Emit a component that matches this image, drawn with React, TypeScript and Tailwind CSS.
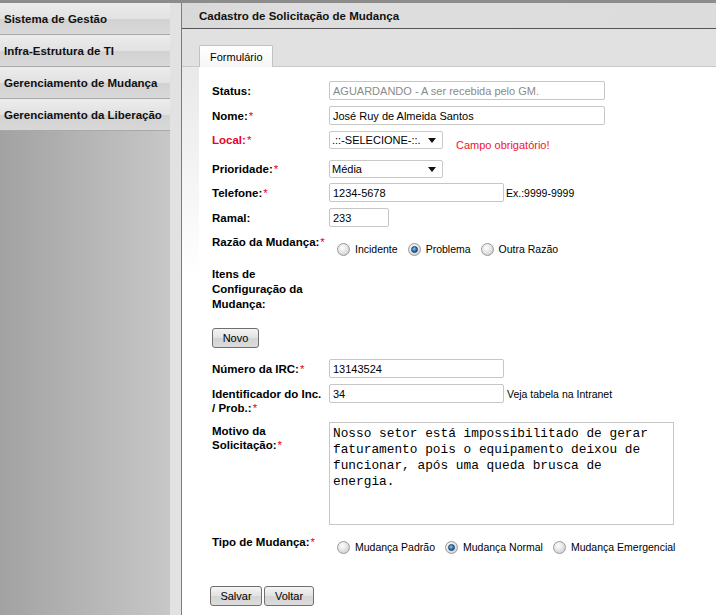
import React from 'react'

const menu = [
  'Sistema de Gestão',
  'Infra-Estrutura de TI',
  'Gerenciamento de Mudança',
  'Gerenciamento da Liberação',
]

const Req = () => <span className="text-[#e8002a] font-normal ml-[1px]">*</span>

const Radio = ({ checked }: { checked?: boolean }) => (
  <span className="relative inline-flex w-[13px] h-[13px] rounded-full border border-[#9a9a9a] bg-[radial-gradient(circle_at_40%_35%,#ffffff_0%,#e6e6e6_45%,#c4c4c4_100%)] items-center justify-center shrink-0">
    {checked && (
      <span className="w-[7px] h-[7px] rounded-full border border-[#1a3d63] bg-[radial-gradient(circle_at_40%_35%,#8cc8f0_0%,#2a73b8_55%,#123e70_100%)]" />
    )}
  </span>
)

const RadioOpt = ({ label, checked }: { label: string; checked?: boolean }) => (
  <span className="inline-flex items-center h-[14px]">
    <Radio checked={checked} />
    <span className="ml-[5px] text-[10.5px]">{label}</span>
  </span>
)

const Select = ({ value }: { value: string }) => (
  <div className="flex items-center justify-between w-[114px] h-[18px] border border-[#c9c9c9] rounded-[2px] bg-white pl-[2px] pr-[6px] text-[11px]">
    <span>{value}</span>
    <svg width="8" height="5" viewBox="0 0 8 5">
      <path d="M0 0 L8 0 L4 5 Z" fill="#111" />
    </svg>
  </div>
)

const Input = ({ value, w, muted }: { value: string; w: string; muted?: boolean }) => (
  <div
    className={`${w} h-[19px] border border-[#c6c6c6] rounded-[2px] bg-white px-[3px] flex items-center text-[11px] ${
      muted ? 'text-[#8a8a8a]' : 'text-black'
    }`}
  >
    {value}
  </div>
)

const Button = ({ label, w }: { label: string; w: string }) => (
  <button
    className={`${w} h-[20px] border border-[#707070] rounded-[3px] bg-[linear-gradient(#f4f4f4,#e2e2e2_50%,#d4d4d4_51%,#dcdcdc)] text-[11px] text-black leading-none`}
  >
    {label}
  </button>
)

export default function App() {
  return (
    <div
      className="w-[716px] h-[615px] overflow-hidden flex flex-col bg-white text-[11.5px] leading-[14px] text-black"
      style={{ fontFamily: '"Liberation Sans", Arial, sans-serif' }}
    >
      <div className="h-[3px] bg-[#8c8c8c] shrink-0" />
      <div className="flex flex-1">
        {/* sidebar */}
        <div className="w-[170px] flex flex-col bg-[linear-gradient(to_right,#a2a2a2,#c7c7c7)]">
          {menu.map((m) => (
            <div
              key={m}
              className="h-[32px] border-b border-[#a9a9a9] bg-[linear-gradient(#ececec,#e2e2e2_50%,#d2d2d2_52%,#d8d8d8)] flex items-center pl-[4px] font-bold text-[11.5px] text-[#111]"
            >
              {m}
            </div>
          ))}
        </div>
        <div className="w-[12px] bg-[#e2e2e2] border-r border-[#7c7c7c]" />
        {/* main */}
        <div className="flex-1 flex flex-col bg-[linear-gradient(#e2e2e2_0px,#ffffff_275px)]">
          <div className="h-[26px] border-b border-[#555] bg-[linear-gradient(100deg,#d8d8d8_0%,#dedede_20%,#dcdcdc_100%)] flex items-center pl-[17px] font-bold text-[11.5px] text-[#111]">
            Cadastro de Solicitação de Mudança
          </div>
          <div className="h-[38px] bg-[#e1e1e1] flex items-end pl-[17px] border-b border-[#c8c8c8]">
            <div className="w-[74px] h-[22px] -mb-[1px] border border-b-0 border-[#c2c2c2] rounded-t-[2px] bg-[linear-gradient(#ffffff,#f6f6f6)] flex items-center pl-[10px] text-[11px]">
              Formulário
            </div>
          </div>
          <div className="flex-1 ml-[17px] bg-white pl-[13px] pt-[14px]">
            <div className="flex items-center">
              <div className="w-[117px] font-bold">Status:</div>
              <Input value="AGUARDANDO - A ser recebida pelo GM." w="w-[276px]" muted />
            </div>
            <div className="flex items-center mt-[6px]">
              <div className="w-[117px] font-bold">
                Nome:<Req />
              </div>
              <Input value="José Ruy de Almeida Santos" w="w-[276px]" />
            </div>
            <div className="flex items-center mt-[6px]">
              <div className="w-[117px] font-bold text-[#e8002a]">
                Local:<Req />
              </div>
              <Select value=".::-SELECIONE-::." />
              <span className="relative top-[5px] ml-[13px] text-[#f0142e] text-[11px]">Campo obrigatório!</span>
            </div>
            <div className="flex items-center mt-[11px]">
              <div className="w-[117px] font-bold">
                Prioridade:<Req />
              </div>
              <Select value="Média" />
            </div>
            <div className="flex items-center mt-[5px]">
              <div className="w-[117px] font-bold">
                Telefone:<Req />
              </div>
              <Input value="1234-5678" w="w-[175px]" />
              <span className="ml-[2px] text-[10.5px]">Ex.:9999-9999</span>
            </div>
            <div className="flex items-center mt-[6px]">
              <div className="w-[117px] font-bold">Ramal:</div>
              <Input value="233" w="w-[60px]" />
            </div>
            <div className="flex items-start mt-[8px]">
              <div className="w-[117px] font-bold">
                Razão da Mudança:<Req />
              </div>
              <div className="flex items-center mt-[7px] ml-[8px]">
                <RadioOpt label="Incidente" />
                <span className="ml-[10px]" />
                <RadioOpt label="Problema" checked />
                <span className="ml-[10px]" />
                <RadioOpt label="Outra Razão" />
              </div>
            </div>
            <div className="mt-[11px] w-[117px] font-bold leading-[15px]">
              Itens de
              <br />
              Configuração da
              <br />
              Mudança:
            </div>
            <div className="mt-[16px] flex">
              <Button label="Novo" w="w-[47px]" />
            </div>
            <div className="flex items-center mt-[11px]">
              <div className="w-[117px] font-bold">
                Número da IRC:<Req />
              </div>
              <Input value="13143524" w="w-[175px]" />
            </div>
            <div className="flex items-start mt-[6px]">
              <div className="w-[117px] font-bold leading-[14px] pt-[3px]">
                Identificador do Inc.
                <br />/ Prob.:<Req />
              </div>
              <Input value="34" w="w-[175px]" />
              <span className="ml-[3px] mt-[3px] text-[10.5px]">Veja tabela na Intranet</span>
            </div>
            <div className="flex items-start mt-[7px]">
              <div className="w-[117px] font-bold leading-[14px] pt-[2px]">
                Motivo da
                <br />
                Solicitação:<Req />
              </div>
              <div
                className="w-[345px] h-[103px] border border-[#c6c6c6] bg-white px-[3px] pt-[3px] text-[12.8px] leading-[16px] whitespace-pre"
                style={{ fontFamily: '"Liberation Mono", "Courier New", monospace' }}
              >
                {'Nosso setor está impossibilitado de gerar\nfaturamento pois o equipamento deixou de\nfuncionar, após uma queda brusca de\nenergia.'}
              </div>
            </div>
            <div className="flex items-start mt-[10px]">
              <div className="w-[117px] font-bold">
                Tipo de Mudança:<Req />
              </div>
              <div className="flex items-center mt-[5px] ml-[8px]">
                <RadioOpt label="Mudança Padrão" />
                <span className="ml-[10px]" />
                <RadioOpt label="Mudança Normal" checked />
                <span className="ml-[10px]" />
                <RadioOpt label="Mudança Emergencial" />
              </div>
            </div>
            <div className="flex gap-[2px] mt-[32px] -ml-[2px]">
              <Button label="Salvar" w="w-[52px]" />
              <Button label="Voltar" w="w-[50px]" />
            </div>
          </div>
        </div>
      </div>
    </div>
  )
}
